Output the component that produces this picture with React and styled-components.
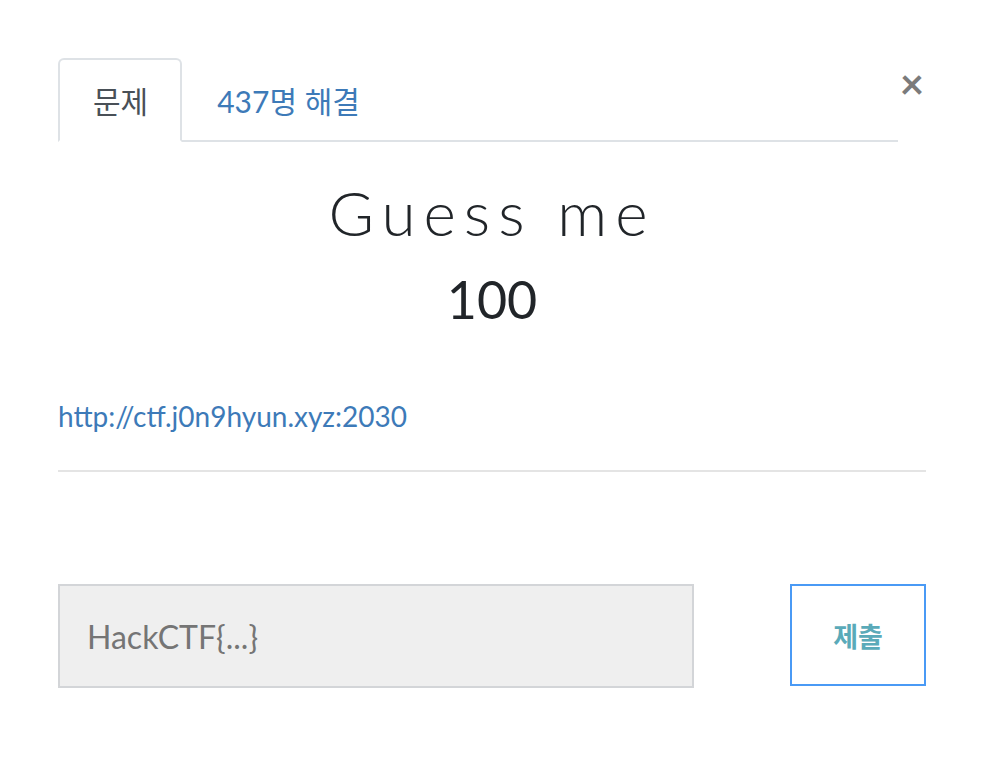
import React from 'react';
import styled, { createGlobalStyle } from 'styled-components';

const GlobalStyle = createGlobalStyle`
  html, body {
    margin: 0;
    padding: 0;
    background: #ffffff;
  }
  body {
    font-family: Lato, "Noto Sans CJK KR", sans-serif;
    color: #212529;
  }
`;

const Modal = styled.div`
  width: 868px;
  padding: 58px 56px 0 58px;
`;

const Header = styled.div`
  display: flex;
  align-items: flex-start;
`;

const Tabs = styled.ul`
  display: flex;
  flex: 1;
  margin: 0;
  padding: 0;
  list-style: none;
  border-bottom: 2px solid #dee2e6;
`;

const Tab = styled.li`
  height: 80px;
  margin-bottom: -2px;
  padding: 0 32px 0 33px;
  display: flex;
  align-items: center;
  font-size: 30px;
  font-family: Lato, "Noto Sans CJK KR", sans-serif;
  color: ${props => (props.active ? '#495057' : '#3d7ab8')};
  background: ${props => (props.active ? '#fff' : 'transparent')};
  border: 2px solid ${props => (props.active ? '#dee2e6' : 'transparent')};
  border-bottom-color: ${props => (props.active ? '#fff' : 'transparent')};
  border-radius: 6px 6px 0 0;
`;

const Close = styled.button`
  width: 28px;
  margin: 4px 0 0 0;
  padding: 0;
  border: none;
  background: none;
  font-family: Lato, sans-serif;
  font-size: 42px;
  font-weight: 700;
  line-height: 1;
  color: #7b7b7b;
  cursor: pointer;
`;

const Title = styled.h2`
  margin: 33px 0 0;
  text-align: center;
  font-family: Lato, sans-serif;
  font-weight: 300;
  font-size: 62px;
  line-height: 1.2;
  letter-spacing: 8px;
  color: #212529;
`;

const Points = styled.h3`
  margin: 19px 0 0;
  text-align: center;
  font-family: Lato, sans-serif;
  font-weight: 400;
  font-size: 52px;
  line-height: 1.2;
  color: #212529;
`;

const Description = styled.p`
  margin: 69px 0 0;
  font-size: 28px;
  line-height: 1.2;
`;

const Link = styled.a`
  color: #3d7ab8;
  text-decoration: none;
`;

const Divider = styled.hr`
  margin: 37px 0 0;
  border: none;
  border-top: 2px solid #e4e4e4;
`;

const SubmitRow = styled.form`
  display: flex;
  justify-content: space-between;
  align-items: flex-start;
  margin-top: 112px;
`;

const FlagInput = styled.input`
  box-sizing: border-box;
  width: 636px;
  height: 104px;
  padding: 0 27px;
  background: #efefef;
  border: 2px solid #d3d5d8;
  font-family: Lato, sans-serif;
  font-size: 32px;
  color: #495057;
  outline: none;

  ::placeholder {
    color: #6c757d;
  }
`;

const SubmitButton = styled.button`
  box-sizing: border-box;
  width: 136px;
  height: 102px;
  background: #fff;
  border: 2px solid #4a9af5;
  font-family: "Noto Sans CJK KR", sans-serif;
  font-size: 27px;
  font-weight: 700;
  color: #5aaab9;
  cursor: pointer;
`;

const App = () => {
  return (
    <>
      <GlobalStyle />
      <Modal>
        <Header>
          <Tabs>
            <Tab active>문제</Tab>
            <Tab>437명 해결</Tab>
          </Tabs>
          <Close>×</Close>
        </Header>
        <Title>Guess me</Title>
        <Points>100</Points>
        <Description>
          <Link href="#">http://ctf.j0n9hyun.xyz:2030</Link>
        </Description>
        <Divider />
        <SubmitRow onSubmit={e => e.preventDefault()}>
          <FlagInput placeholder="HackCTF{...}" />
          <SubmitButton>제출</SubmitButton>
        </SubmitRow>
      </Modal>
    </>
  );
};

export default App;
